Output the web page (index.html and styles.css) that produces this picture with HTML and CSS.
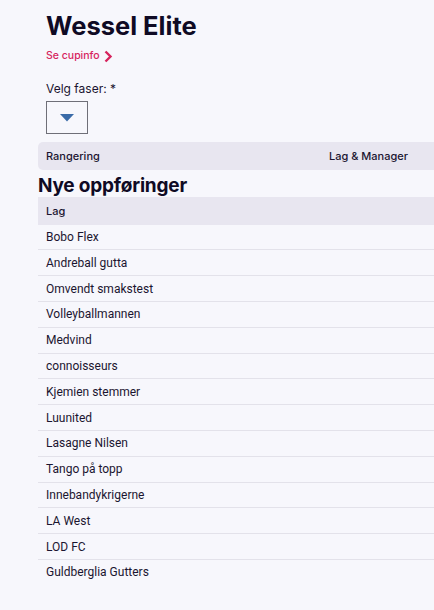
FILE: index.html
```html
<!DOCTYPE html>
<html lang="no">
<head>
<meta charset="utf-8">
<link rel="stylesheet" href="styles.css">
</head>
<body>
<div class="page">
  <header class="top">
    <h1 class="title">Wessel Elite</h1>
    <a class="cupinfo" href="#">Se cupinfo
      <svg class="chev" width="9" height="13" viewBox="0 0 9 13"><path d="M1.5 1.5 L6.5 6.5 L1.5 11.5" fill="none" stroke="#d6245e" stroke-width="2.4"/></svg>
    </a>
    <label class="phase-label">Velg faser: *</label>
    <div class="select">
      <svg width="14" height="8" viewBox="0 0 14 8"><path d="M0 0 H14 L7 7.5 Z" fill="#3a6ba8"/></svg>
    </div>
  </header>
  <div class="thead">
    <span class="th-rank">Rangering</span>
    <span class="th-team">Lag &amp; Manager</span>
  </div>
  <h2 class="section">Nye oppføringer</h2>
  <div class="list">
    <div class="list-head">Lag</div>
    <div class="row">Bobo Flex</div>
    <div class="row">Andreball gutta</div>
    <div class="row">Omvendt smakstest</div>
    <div class="row">Volleyballmannen</div>
    <div class="row">Medvind</div>
    <div class="row">connoisseurs</div>
    <div class="row">Kjemien stemmer</div>
    <div class="row">Luunited</div>
    <div class="row">Lasagne Nilsen</div>
    <div class="row">Tango på topp</div>
    <div class="row">Innebandykrigerne</div>
    <div class="row">LA West</div>
    <div class="row">LOD FC</div>
    <div class="row last">Guldberglia Gutters</div>
  </div>
</div>
</body>
</html>
```
FILE: styles.css
```css
html, body {
  margin: 0;
  padding: 0;
  background: #f7f7fc;
}
body {
  font-family: Inter, "Noto Sans", sans-serif;
  color: #1b1530;
}
.page {
  padding: 10px 0 0 38px;
}
.top {
  padding-left: 8px;
}
.title {
  margin: 0;
  font-size: 25.5px;
  font-weight: 700;
  line-height: 32px;
  letter-spacing: 0;
  color: #0f0a24;
}
.cupinfo {
  display: flex;
  align-items: center;
  gap: 4px;
  margin-top: 7px;
  font-size: 10.5px;
  font-weight: 500;
  color: #d6245e;
  text-decoration: none;
  line-height: 14px;
}
.phase-label {
  display: block;
  margin-top: 18px;
  font-size: 12px;
  line-height: 16px;
  color: #1b1530;
}
.select {
  margin-top: 4px;
  width: 40px;
  height: 31px;
  border: 1px solid #6f6f78;
  display: flex;
  align-items: center;
  justify-content: center;
}
.thead {
  margin-top: 8px;
  height: 28px;
  background: #e8e6f0;
  border-radius: 5px 0 0 5px;
  display: flex;
  align-items: center;
  font-size: 11px;
  font-weight: 500;
  color: #1b1530;
}
.th-rank {
  padding-left: 8px;
  width: 283px;
}
.section {
  margin: 5px 0 0 0;
  font-size: 19px;
  font-weight: 700;
  line-height: 22px;
  letter-spacing: -0.2px;
  color: #0f0a24;
}
.list-head {
  height: 27.6px;
  background: #e8e6f0;
  display: flex;
  align-items: center;
  padding-left: 8px;
  font-size: 11px;
  font-weight: 500;
}
.row {
  height: 24.8px;
  border-bottom: 1px solid #e3e2ea;
  display: flex;
  align-items: center;
  padding-left: 8px;
  font-family: Roboto, "Noto Sans", sans-serif;
  font-size: 12px;
  color: #1b1530;
}
.row.last {
  border-bottom: none;
}
```
